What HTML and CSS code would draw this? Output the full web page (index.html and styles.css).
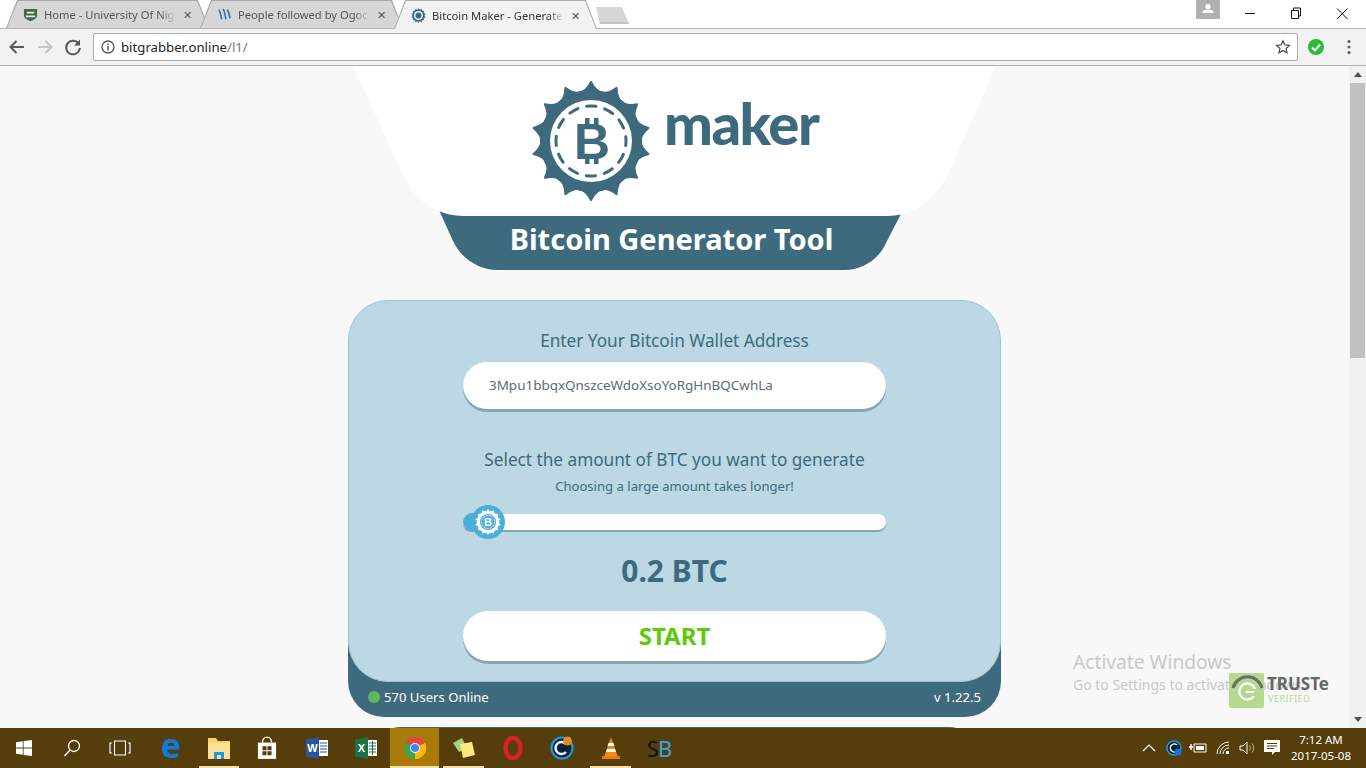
FILE: index.html
```html
<!DOCTYPE html>
<html lang="en">
<head>
<meta charset="utf-8">
<title>Bitcoin Maker - Generator</title>
<link rel="stylesheet" href="styles.css">
</head>
<body>
<svg class="defs" width="0" height="0">
  <defs>
    <path id="tooth" d="M-12.500 -48 Q-5 -49 0 -59 Q5 -49 12.500 -48 Z"/>
    <g id="gear">
      <circle r="50"/>
      <use href="#tooth"/><use href="#tooth" transform="rotate(25.714)"/><use href="#tooth" transform="rotate(51.428)"/><use href="#tooth" transform="rotate(77.143)"/><use href="#tooth" transform="rotate(102.857)"/><use href="#tooth" transform="rotate(128.571)"/><use href="#tooth" transform="rotate(154.286)"/><use href="#tooth" transform="rotate(180)"/><use href="#tooth" transform="rotate(205.714)"/><use href="#tooth" transform="rotate(231.428)"/><use href="#tooth" transform="rotate(257.143)"/><use href="#tooth" transform="rotate(282.857)"/><use href="#tooth" transform="rotate(308.571)"/><use href="#tooth" transform="rotate(334.286)"/>
    </g>
  </defs>
</svg>

<div class="tabstrip">
  <div class="tab">
    <svg class="fav" viewBox="0 0 16 16"><path d="M1 2h14v7c0 3-4 5-7 6-3-1-7-3-7-6z" fill="#3f6b4e"/><path d="M4 5h8v2H4zM3 9h10v2H3z" fill="#e8e8e8"/></svg>
    <span class="tab-title">Home - University Of Nig</span><span class="tab-x">✕</span>
  </div>
  <div class="tab">
    <svg class="fav" viewBox="0 0 16 16"><path d="M2 3c2 3 2 6 3 10M6.500 2c2 3 2 7 3 11M11 3c2 3 2 6 3 9" stroke="#3d6fb0" stroke-width="1.800" fill="none"/></svg>
    <span class="tab-title">People followed by Ogoc</span><span class="tab-x">✕</span>
  </div>
  <div class="tab tab-active">
    <svg class="fav" viewBox="-60 -60 120 120"><use href="#gear" fill="#3d6b7d"/><circle r="36" fill="#f2f2f2"/><circle r="24" fill="#3d6b7d"/></svg>
    <span class="tab-title">Bitcoin Maker - Generate</span><span class="tab-x">✕</span>
  </div>
  <div class="newtab"></div>
  <div class="winctl">
    <div class="userbadge"><svg viewBox="0 0 24 19" width="24" height="19"><circle cx="12" cy="6.500" r="2.600" fill="#fff"/><path d="M6.500 13c0-2.400 2.400-3.400 5.500-3.400s5.500 1 5.500 3.400z" fill="#fff"/></svg></div>
    <svg class="winbtn" viewBox="0 0 46 27"><path d="M18 13.500h10" stroke="#111" fill="none"/></svg>
    <svg class="winbtn" viewBox="0 0 46 27"><path d="M18.500 10.500h7v8h-7zM20.500 10.500v-2.500h7v8h-2" stroke="#111" fill="none"/></svg>
    <svg class="winbtn" viewBox="0 0 46 27"><path d="M18 8.500l10.500 10.500M28.500 8.500L18 19" stroke="#111" fill="none"/></svg>
  </div>
</div>

<div class="toolbar">
  <svg class="tool" viewBox="0 0 28 28"><path d="M21 14H8M13.500 8l-6 6 6 6" stroke="#5a5a5a" stroke-width="2" fill="none"/></svg>
  <svg class="tool" viewBox="0 0 28 28"><path d="M7 14h13M14.500 8l6 6-6 6" stroke="#c6c6c6" stroke-width="2" fill="none"/></svg>
  <svg class="tool" viewBox="0 0 28 28"><path d="M19.500 10.500a6.800 6.800 0 1 0 1.300 4.500" stroke="#5a5a5a" stroke-width="2" fill="none"/><path d="M21 6.500v6h-6z" fill="#5a5a5a"/></svg>
  <div class="omnibox">
    <svg class="info" viewBox="0 0 14 14"><circle cx="7" cy="7" r="6" fill="none" stroke="#555" stroke-width="1.300"/><path d="M7 6v4.500M7 3.500v1.500" stroke="#555" stroke-width="1.500"/></svg>
    <span class="url">bitgrabber.online<span class="url-path">/l1/</span></span>
    <svg class="star" viewBox="0 0 16 16"><path d="M8 1.800l1.900 4.100 4.500.5-3.300 3 .9 4.400L8 11.600l-4 2.200.9-4.400-3.300-3 4.500-.5z" fill="none" stroke="#555" stroke-width="1.300"/></svg>
  </div>
  <svg class="ext" viewBox="0 0 18 18"><circle cx="9" cy="9" r="8" fill="#2dba3a"/><path d="M5 9.500l3 3 5-6" stroke="#fff" stroke-width="2" fill="none"/></svg>
  <svg class="menu" viewBox="0 0 4 16"><circle cx="2" cy="2.500" r="1.500" fill="#5a5a5a"/><circle cx="2" cy="8" r="1.500" fill="#5a5a5a"/><circle cx="2" cy="13.500" r="1.500" fill="#5a5a5a"/></svg>
</div>

<div class="content">
  <main class="viewport">
    <header class="hero">
      <svg class="hero-bg" viewBox="0 0 643 204" width="643" height="204">
        <path d="M86 144L100 175C108 192 125 204 145 204H491C511 204 527 192 534 175L550 144Z" fill="#3d6b7d"/>
        <path d="M0 0H643L594 110C580 135 560 150 534 150H111C85 150 62 135 51 110Z" fill="#fff"/>
      </svg>
      <div class="brand">
        <svg class="logo" viewBox="-61 -61 122 122" width="122" height="122">
          <use href="#gear" fill="#3d6b7d" stroke="#3d6b7d" stroke-width="2" stroke-linejoin="round"/>
          <circle r="41" fill="#fff"/>
          <circle r="35" fill="none" stroke="#3d6b7d" stroke-width="3" stroke-linecap="round" stroke-dasharray="9.300 9.030" stroke-dashoffset="4.650"/>
          <g fill="#3d6b7d">
            <text class="logo-b" x="1" y="18" text-anchor="middle">B</text>
            <rect x="-6" y="-23" width="4.500" height="7"/><rect x="3" y="-23" width="4.500" height="7"/>
            <rect x="-6" y="16" width="4.500" height="7"/><rect x="3" y="16" width="4.500" height="7"/>
          </g>
        </svg>
        <span class="maker">maker</span>
      </div>
      <h1 class="tool-title">Bitcoin Generator Tool</h1>
    </header>

    <section class="card">
      <div class="card-main">
        <h2 class="label">Enter Your Bitcoin Wallet Address</h2>
        <div class="pill address">3Mpu1bbqxQnszceWdoXsoYoRgHnBQCwhLa</div>
        <h2 class="label label-select">Select the amount of BTC you want to generate</h2>
        <p class="hint">Choosing a large amount takes longer!</p>
        <div class="slider">
          <div class="track"></div>
          <div class="fill"></div>
          <div class="thumb">
            <svg viewBox="-61 -61 122 122" width="26" height="26"><use href="#gear" fill="#fff" stroke="#fff" stroke-width="3"/><circle r="38" fill="#4ab0d9"/><circle r="31" fill="none" stroke="#fff" stroke-width="4" stroke-dasharray="9 6"/><text class="logo-b thumb-b" x="0" y="18" text-anchor="middle" fill="#fff">B</text></svg>
          </div>
        </div>
        <div class="amount">0.2 BTC</div>
        <div class="pill start">START</div>
      </div>
      <footer class="card-foot">
        <span class="online"><i class="dot"></i>570 Users Online</span>
        <span>v 1.22.5</span>
      </footer>
    </section>
    <div class="next-card"></div>

    <div class="activate">
      <div class="activate-title">Activate Windows</div>
      <div class="activate-sub">Go to Settings to activate Windows.</div>
    </div>
    <div class="truste">
      <div class="truste-mark">
        <svg viewBox="0 0 36 35" width="36" height="35"><path d="M4 15a15 15 0 0 1 29 0" stroke="#6d6d6d" stroke-width="3" fill="none"/><path d="M25 23a8 8 0 1 1 1-7M17 19h8" stroke="#fff" stroke-width="2.200" fill="none"/></svg>
      </div>
      <div class="truste-text"><b>TRUSTe</b><span>VERIFIED</span></div>
    </div>
  </main>
  <div class="scrollbar">
    <span class="sb-arrow up"></span>
    <div class="sb-thumb"></div>
    <span class="sb-arrow down"></span>
  </div>
</div>

<footer class="taskbar">
  <div class="task"><svg viewBox="0 0 16 16" width="16" height="16"><path d="M0 2.200l6.800-1v6.400H0zM7.600 1.100L16 0v7.600H7.600zM0 8.400h6.800v6.400l-6.800-1zM7.600 8.400H16V16l-8.400-1.100z" fill="#fff"/></svg></div>
  <div class="task"><svg viewBox="0 0 18 18" width="18" height="18"><circle cx="11" cy="7" r="5.500" fill="none" stroke="#fff" stroke-width="1.300"/><path d="M7 11l-5.500 6" stroke="#fff" stroke-width="1.500"/></svg></div>
  <div class="task"><svg viewBox="0 0 22 16" width="22" height="16"><path d="M5.500 1h11v14h-11zM3 3H1v10h2M19 3h2v10h-2" fill="none" stroke="#fff" stroke-width="1.100"/></svg></div>
  <div class="task task-gap"><span class="edge">e</span></div>
  <div class="task task-run"><svg viewBox="0 0 22 22" width="22" height="22"><path d="M0 1h8l2 3h12v18H0z" fill="#f6d365"/><path d="M0 6h22v16H0z" fill="#fbe29a"/><path d="M6 22v-7h10v7h-3v-4H9v4z" fill="#1e9be0"/></svg></div>
  <div class="task"><svg viewBox="0 0 22 26" width="20" height="24"><path d="M1 7h20v18H1z" fill="#fff"/><path d="M6 7c0-8 10-8 10 0" fill="none" stroke="#fff" stroke-width="1.500"/><path d="M6 11h4.500v4.500H6zM11.500 11H16v4.500h-4.500zM6 16.500h4.500V21H6zM11.500 16.500H16V21h-4.500z" fill="#553e0c"/></svg></div>
  <div class="task task-step"><svg viewBox="0 0 22 22" width="22" height="22"><path d="M0 2.500L13 0v22L0 19.500z" fill="#2b579a"/><path d="M13 3h9v16h-9z" fill="#fff"/><path d="M14 6h7M14 9h7M14 12h7M14 15h7" stroke="#2b579a"/><text class="doc-letter" x="6.500" y="15" text-anchor="middle">W</text></svg></div>
  <div class="task task-wide"><svg viewBox="0 0 22 22" width="22" height="22"><path d="M0 2.500L13 0v22L0 19.500z" fill="#1e7145"/><path d="M13 3h9v16h-9z" fill="#fff"/><path d="M14 6h7M14 9h7M14 12h7M14 15h7M17.500 4v14" stroke="#1e7145"/><text class="doc-letter" x="6.500" y="15" text-anchor="middle">X</text></svg></div>
  <div class="task task-wide task-on task-run"><svg viewBox="0 0 22 22" width="22" height="22"><circle cx="11" cy="11" r="11" fill="#e8453c"/><path d="M11 11L1.500 5.500A11 11 0 0 0 11 22z" fill="#34a853"/><path d="M11 11v11A11 11 0 0 0 21 6z" fill="#fbbc05"/><circle cx="11" cy="11" r="5" fill="#fff"/><circle cx="11" cy="11" r="4" fill="#4285f4"/></svg></div>
  <div class="task task-wide task-run"><svg viewBox="0 0 24 22" width="24" height="22"><path d="M1 6l9-5 5 10-8 4z" fill="#a5cf83"/><path d="M8 7l12-2 3 13-12 3z" fill="#fbe97e"/></svg></div>
  <div class="task task-wide"><svg viewBox="0 0 20 24" width="20" height="24"><ellipse cx="10" cy="12" rx="7.500" ry="10" fill="none" stroke="#d8202a" stroke-width="4.500"/></svg></div>
  <div class="task task-wide"><svg viewBox="0 0 24 24" width="24" height="24"><circle cx="12" cy="12" r="10.500" fill="#0b2238" stroke="#1e9be0" stroke-width="2"/><path d="M16 8a6 6 0 1 0 0 8" fill="none" stroke="#e8f4ff" stroke-width="2.500"/><circle cx="17.500" cy="5" r="4.500" fill="#e08a2a"/></svg></div>
  <div class="task task-wide task-run"><svg viewBox="0 0 20 24" width="20" height="24"><path d="M10 1l7 20H3z" fill="#f08a12"/><path d="M7.500 7h5l1 3h-7zM6 13h8l1 3H5z" fill="#fff"/><path d="M1 20h18v3H1z" fill="#e67e12"/></svg></div>
  <div class="task"><span class="sb-logo">S<em>B</em></span></div>
  <div class="tray">
    <div class="tray-cell"><svg viewBox="0 0 14 8" width="14" height="8"><path d="M1 7l6-6 6 6" fill="none" stroke="#fff" stroke-width="1.200"/></svg></div>
    <div class="tray-cell"><svg viewBox="0 0 16 16" width="16" height="16"><circle cx="8" cy="8" r="7" fill="#0b2238" stroke="#1e9be0" stroke-width="1.500"/><path d="M11 5a4 4 0 1 0 0 6" fill="none" stroke="#fff" stroke-width="1.500"/><circle cx="12" cy="12" r="3.500" fill="#1e6fd0"/></svg></div>
    <div class="tray-cell"><svg viewBox="0 0 18 12" width="18" height="12"><path d="M5 2h12v8H5z" fill="none" stroke="#fff"/><path d="M7 4h8v4H7z" fill="#fff"/><path d="M0 5h4M2 2v6" stroke="#fff" stroke-width="1.500"/></svg></div>
    <div class="tray-cell"><svg viewBox="0 0 14 14" width="14" height="14"><path d="M1 13A12 12 0 0 1 13 1M4 13a9 9 0 0 1 9-9M7 13a6 6 0 0 1 6-6" fill="none" stroke="#fff"/><path d="M10 10h3v3h-3z" fill="#fff"/></svg></div>
    <div class="tray-cell"><svg viewBox="0 0 16 14" width="16" height="14"><path d="M1 5h3l4-4v12l-4-4H1z" fill="none" stroke="#fff"/><path d="M10.500 4.500a4 4 0 0 1 0 5M13 2.500a7 7 0 0 1 0 9" fill="none" stroke="#b8ad94"/></svg></div>
    <div class="tray-cell"><svg viewBox="0 0 16 16" width="16" height="16"><path d="M0 0h16v12h-5l-3 3v-3H0z" fill="#fff"/><path d="M3 3.500h10M3 6h10M3 8.500h7" stroke="#553e0c"/></svg></div>
    <div class="clock"><div>7:12 AM</div><div>2017-05-08</div></div>
  </div>
</footer>
</body>
</html>
```
FILE: styles.css
```css
* { box-sizing: border-box; }
html, body { margin: 0; height: 100%; }
body {
  width: 1366px;
  height: 768px;
  overflow: hidden;
  display: flex;
  flex-direction: column;
  background: #fff;
  font-family: "Noto Sans", sans-serif;
}
.defs { position: absolute; }

/* browser chrome */
.tabstrip {
  height: 29px;
  flex: none;
  display: flex;
  padding-left: 6px;
  background: #fff;
  border-bottom: 1px solid #b4b4b4;
}
.tab {
  position: relative;
  width: 203px;
  height: 28px;
  margin-right: -9px;
  padding: 1px 14px 0 17px;
  display: flex;
  align-items: center;
  background: #a9a9a9;
  clip-path: polygon(0 100%, 11px 0, calc(100% - 11px) 0, 100% 100%);
  font: 11.200px "Noto Sans", sans-serif;
  color: #555;
}
.tab::before {
  content: "";
  position: absolute;
  inset: 1px 1px 0;
  background: #d6d6d6;
  clip-path: polygon(0 100%, 11px 0, calc(100% - 11px) 0, 100% 100%);
}
.tab-active { background: #b0b0b0; color: #333; z-index: 1; height: 29px; }
.tab-active::before { background: #f2f2f2; }
.fav { position: relative; width: 15px; height: 15px; flex: none; margin-right: 6px; }
.tab-title {
  position: relative;
  width: 132px;
  flex: none;
  white-space: nowrap;
  -webkit-mask-image: linear-gradient(90deg, #000 88%, transparent);
  mask-image: linear-gradient(90deg, #000 88%, transparent);
}
.tab-x { position: relative; margin-left: 7px; font-size: 11px; color: #555; }
.newtab {
  width: 33px;
  height: 17px;
  margin: 7px 0 0 8px;
  background: #d6d6d6;
  border-bottom: 2px solid #c4c4c4;
  clip-path: polygon(0 0, 78% 0, 100% 100%, 12% 100%);
}
.winctl { margin-left: auto; padding-right: 1px; display: flex; align-items: flex-start; }
.userbadge { width: 24px; height: 19px; background: #b0b0b0; margin-right: 7px; }
.userbadge svg { display: block; }
.winbtn { width: 46px; height: 27px; display: block; }

.toolbar {
  height: 37px;
  flex: none;
  display: flex;
  align-items: center;
  padding-left: 3px;
  background: #f2f2f2;
  border-bottom: 1px solid #b4b4b4;
}
.tool { width: 28px; height: 28px; flex: none; }
.omnibox {
  width: 1205px;
  height: 28px;
  margin-left: 6px;
  display: flex;
  align-items: center;
  padding: 0 6px 0 7px;
  background: #fff;
  border: 1px solid #acacac;
  border-radius: 2px;
}
.info { width: 14px; height: 14px; margin-right: 6px; }
.url { font: 13.200px "Noto Sans", sans-serif; color: #222; }
.url-path { color: #777; }
.star { width: 16px; height: 16px; margin-left: auto; }
.ext { width: 18px; height: 18px; margin-left: 9px; }
.menu { width: 4px; height: 16px; margin-left: 22px; }

/* page */
.content { flex: 1; min-height: 0; display: flex; background: #f8f8f8; }
.viewport {
  position: relative;
  flex: 1;
  min-width: 0;
  overflow: hidden;
  display: flex;
  flex-direction: column;
  align-items: center;
  font-family: "Noto Sans", sans-serif;
  color: #3d6b7d;
}
.hero { position: relative; width: 643px; height: 204px; flex: none; padding-top: 14px; }
.hero-bg { position: absolute; left: 0; top: 0; }
.brand { position: relative; display: flex; padding-left: 177px; height: 122px; }
.logo { flex: none; display: block; }
.logo-b { font: 700 50px "Liberation Sans", sans-serif; }
.thumb-b { font-size: 52px; }
.maker {
  margin-left: 12px;
  margin-top: 8px;
  font: 900 58px/70px "Lato", sans-serif;
  letter-spacing: -1.500px;
  color: #3d6b7d;
}
.tool-title {
  position: relative;
  margin: 17px 6px 0 0;
  text-align: center;
  font: 700 29px/40px "Noto Sans", sans-serif;
  color: #fff;
}

.card { width: 653px; margin-top: 30px; flex: none; }
.card-main {
  position: relative;
  z-index: 1;
  height: 382px;
  padding: 28px 0 0;
  display: flex;
  flex-direction: column;
  align-items: center;
  background: #bbd8e4;
  border: 1px solid #9fc4d4;
  border-radius: 40px;
}
.label { margin: 0; font: 400 17.200px/24px "Noto Sans", sans-serif; color: #3d6b7d; }
.label-select { margin-top: 39px; }
.hint { margin: 4px 0 0; font: 400 13.100px/20px "Noto Sans", sans-serif; color: #3d6b7d; }
.pill {
  width: 423px;
  height: 50px;
  flex: none;
  display: flex;
  align-items: center;
  background: #fff;
  border-radius: 25px;
  box-shadow: 0 3px 0 #86a6b3;
}
.address {
  margin-top: 8px;
  padding-left: 26px;
  height: 48px;
  border-radius: 24px;
  font-size: 13.450px;
  color: #5b6b75;
  box-shadow: 0 3px 0 #86a6b3, inset 0 1px 1px #c9c9c9;
}
.slider { position: relative; width: 423px; height: 34px; margin-top: 9px; flex: none; }
.track {
  position: absolute;
  left: 0;
  right: 0;
  top: 9px;
  height: 16px;
  background: #fff;
  border-radius: 8px;
  box-shadow: 0 2px 0 #86a6b3;
}
.fill {
  position: absolute;
  left: 0;
  top: 8px;
  width: 26px;
  height: 18px;
  background: #4ab0d9;
  border-radius: 9px;
}
.thumb {
  position: absolute;
  left: 8px;
  top: 0;
  width: 34px;
  height: 34px;
  display: flex;
  align-items: center;
  justify-content: center;
  background: #4ab0d9;
  border-radius: 50%;
}
.amount { margin-top: 12px; font: 700 30px/40px "Noto Sans", sans-serif; color: #3d6b7d; }
.start {
  margin-top: 20px;
  padding-bottom: 2px;
  justify-content: center;
  font: 700 24px "Noto Sans", sans-serif;
  color: #5ec90c;
}
.card-foot {
  height: 75px;
  margin-top: -40px;
  padding: 35px 20px 0;
  display: flex;
  align-items: center;
  justify-content: space-between;
  background: #3d6b7d;
  border-radius: 0 0 36px 36px;
  font: 13.100px "Noto Sans", sans-serif;
  color: #fff;
}
.online { display: flex; align-items: center; }
.dot { width: 12px; height: 12px; margin-right: 4px; border-radius: 50%; background: #5cb85c; }
.next-card { width: 590px; height: 40px; margin-top: 10px; flex: none; background: #3d6b7d; border-radius: 20px 20px 0 0; }

.activate { position: absolute; left: 1073px; top: 583px; color: #c8c8c8; white-space: nowrap; }
.activate-title { font: 19.200px/26px "Noto Sans", sans-serif; }
.activate-sub { font: 14px/20px "Noto Sans", sans-serif; }
.truste { position: absolute; left: 1229px; top: 607px; display: flex; }
.truste-mark { width: 35px; height: 35px; background: #b5d98f; border-radius: 2px; }
.truste-mark svg { display: block; }
.truste-text { margin-left: 3px; padding-top: 1px; display: flex; flex-direction: column; }
.truste-text b { font: 700 17px/20px "Noto Sans", sans-serif; color: #666; }
.truste-text span { font: 9px/10px "Noto Sans", sans-serif; color: #b5d98f; letter-spacing: .5px; margin-left: 1px; }

.scrollbar { width: 17px; flex: none; display: flex; flex-direction: column; align-items: center; background: #f1f1f1; }
.sb-arrow { width: 0; height: 0; border-left: 4px solid transparent; border-right: 4px solid transparent; }
.up { margin-top: 6px; border-bottom: 5px solid #505050; }
.down { margin-top: auto; margin-bottom: 6px; border-top: 5px solid #505050; }
.sb-thumb { width: 15px; height: 275px; margin-top: 6px; background: #c1c1c1; }

/* taskbar */
.taskbar { height: 40px; flex: none; display: flex; align-items: stretch; background: #553e0c; }
.task { position: relative; width: 48px; flex: none; display: flex; align-items: center; justify-content: center; }
.task-gap { margin-left: 3px; }
.task-step { width: 49px; margin-left: 1px; }
.task-wide { width: 49px; }
.task-on { background: #a87a08; }
.task-run::after {
  content: "";
  position: absolute;
  left: 4px;
  right: 4px;
  bottom: 0;
  height: 2px;
  background: #f3dfa8;
}
.task-on.task-run::after { left: 0; right: 0; }
.edge { font: 700 34px/36px "Noto Sans", sans-serif; color: #0f7bd8; margin-top: -6px; }
.doc-letter { font: 700 11px "Liberation Sans", sans-serif; fill: #fff; }
.sb-logo { font: 400 22px "Noto Sans", sans-serif; color: #111; letter-spacing: -1px; }
.sb-logo em { font-style: normal; color: #3aa6dc; }
.tray { margin-left: auto; display: flex; align-items: center; padding-right: 8px; }
.tray-cell { width: 24.500px; display: flex; justify-content: center; }
.clock { width: 74px; font: 11.500px/16px "Noto Sans", sans-serif; color: #fff; text-align: center; }
```
